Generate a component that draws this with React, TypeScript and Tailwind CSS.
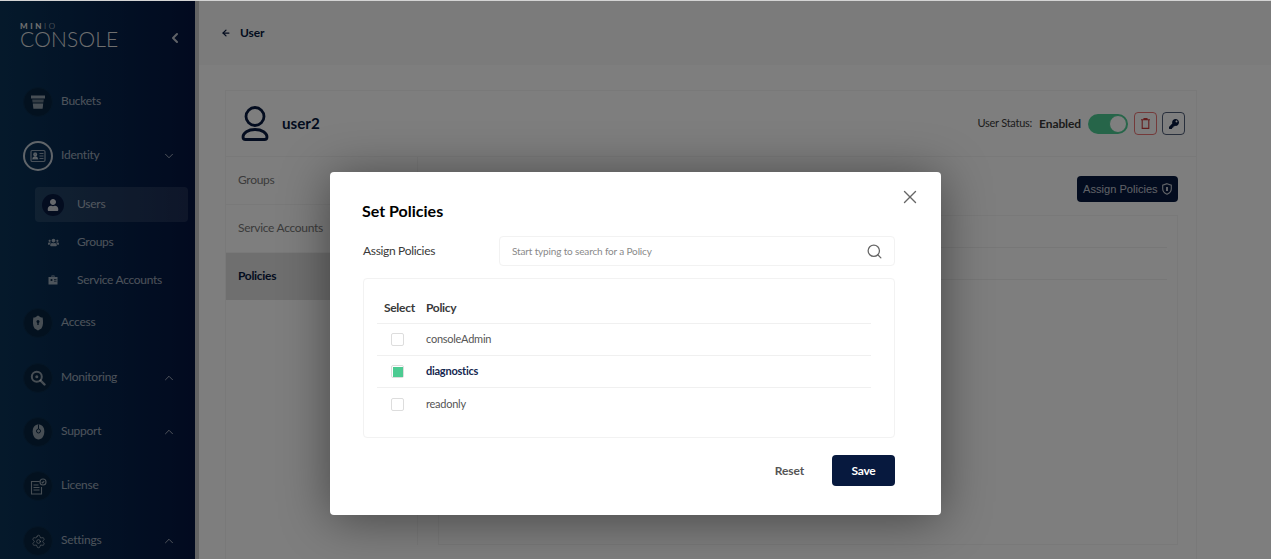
import { ChevronDown, ChevronLeft, ChevronUp, Settings, Search, X, ArrowLeft } from "lucide-react";
import { FaUsers, FaKey, FaUser } from "react-icons/fa";
import type { ReactNode } from "react";

const BucketIcon = () => (
  <svg width="16" height="16" viewBox="0 0 16 16" fill="currentColor" aria-hidden>
    <path d="M1 1.500h14v3H1z" />
    <path d="M2.200 5.600h11.600l-.4 3H2.600z" opacity=".7" />
    <path d="M2.800 9.600h10.400l-.6 5.200H3.400z" />
  </svg>
);

const IdentityIcon = () => (
  <svg width="16" height="14" viewBox="0 0 16 14" fill="none" stroke="currentColor" strokeWidth="1.200" aria-hidden>
    <rect x="1" y="1.500" width="14" height="11" rx="1.200" />
    <path d="M9.500 4.500h4M9.500 7h4M9.500 9.500h4" />
    <circle cx="5.200" cy="5.400" r="1.500" fill="currentColor" />
    <path d="M2.800 10c.2-1.600 1.200-2.200 2.400-2.200s2.200.6 2.400 2.200z" fill="currentColor" />
  </svg>
);

const AccessIcon = () => (
  <svg width="12" height="16" viewBox="0 0 12 16" aria-hidden>
    <path d="M6 .5 9 2.400h1.600c.6 3.600.9 8-1.200 11L6 15.500l-3.400-2.100C.5 10.400.8 6 1.400 2.400H3z" fill="currentColor" />
    <circle cx="6" cy="6.500" r="1.500" fill="#06233f" />
    <path d="M5.300 7h1.400v3H5.300z" fill="#06233f" />
  </svg>
);

const MonitoringIcon = () => (
  <svg width="16" height="16" viewBox="0 0 16 16" fill="none" stroke="currentColor" aria-hidden>
    <circle cx="6.800" cy="6.800" r="5" strokeWidth="2" />
    <circle cx="6.800" cy="6.800" r="1.500" fill="currentColor" stroke="none" />
    <path d="M10.500 10.500 14.500 14.500" strokeWidth="2.400" strokeLinecap="round" />
  </svg>
);

const SupportIcon = () => (
  <svg width="13" height="16" viewBox="0 0 13 16" aria-hidden>
    <path d="M6.500.5c3.300 0 5.800 2.300 5.800 6.800 0 5-2.500 8.200-5.800 8.200S.7 12.300.7 7.300C.7 2.800 3.200.5 6.500.5z" fill="currentColor" />
    <circle cx="6.500" cy="7" r="2" fill="none" stroke="#06233f" strokeWidth="1" />
    <path d="M6.500.5v4.500" stroke="#06233f" strokeWidth="1" />
  </svg>
);

const LicenseIcon = () => (
  <svg width="17" height="17" viewBox="0 0 17 17" fill="none" stroke="currentColor" strokeWidth="1.100" aria-hidden>
    <path d="M9.500 3.500H1.500v12.500h10V9" />
    <path d="M3.500 7h5M3.500 9.500h6M3.500 12h6" />
    <circle cx="13" cy="4" r="3" />
    <path d="m11.800 4 .9.9 1.500-1.700" />
  </svg>
);

const ServiceIcon = () => (
  <svg width="10" height="10" viewBox="0 0 10 10" fill="currentColor" aria-hidden>
    <path d="M3.500.5h3V2h3v7.500H.5V2h3zM4.300 1.200V2h1.400v-.8z" />
    <circle cx="3.500" cy="5" r="1.100" fill="#06233f" />
    <path d="M6 4h2.500v.8H6zM6 5.800h2.500v.8H6z" fill="#06233f" />
  </svg>
);

function NavItem({ icon, label, chevron, active }: { icon: ReactNode; label: string; chevron?: "up" | "down"; active?: boolean }) {
  return (
    <div className="flex h-[54px] items-center pl-[23px] pr-[19px]">
      <div
        className={`flex h-[30px] w-[30px] shrink-0 items-center justify-center rounded-full ${
          active ? "border-2 border-white/75" : "border border-[#0a2c4c] bg-[#06233f]"
        } text-white/55`}
      >
        {icon}
      </div>
      <span className="ml-[8px] flex-1 pb-[2px] text-[12px] tracking-[-0.25px] text-white/60">{label}</span>
      {chevron === "up" && <ChevronUp size={14} strokeWidth={1.5} className="text-white/70" />}
      {chevron === "down" && <ChevronDown size={14} strokeWidth={1.5} className="text-white/70" />}
    </div>
  );
}

function SubItem({ icon, label }: { icon: ReactNode; label: string }) {
  return (
    <div className="ml-[35px] flex h-[32px] items-center pl-[12px] text-white/60">
      <div className="flex w-[12px] justify-center">{icon}</div>
      <span className="ml-[18px] text-[12px] tracking-[-0.3px]">{label}</span>
    </div>
  );
}

function Sidebar() {
  return (
    <aside className="h-[559px] w-[199px] shrink-0 overflow-hidden border-r-[4px] border-[#c9c9c9] bg-gradient-to-r from-[#0a3357] to-[#04143f]">
      <div className="flex h-[75px] items-start justify-between pl-[20px] pr-[12px] pt-[22px]">
        <div className="text-[#dedede]">
          <div className="text-[8px] leading-[8px] tracking-[2.600px]">
            <span className="font-black">MIN</span>
            <span className="font-light">IO</span>
          </div>
          <div className="text-[21px] font-light leading-[17px] tracking-[0.2px]">CONSOLE</div>
        </div>
        <ChevronLeft size={16} strokeWidth={3} className="mt-[8px] text-white/75" />
      </div>
      <NavItem icon={<BucketIcon />} label="Buckets" />
      <NavItem icon={<IdentityIcon />} label="Identity" chevron="down" active />
      <div className="ml-[35px] mr-[7px] mt-[4px] flex h-[35px] items-center rounded-sm bg-white/10 pl-[7px]">
        <div className="flex h-[22px] w-[22px] items-center justify-center rounded-full bg-[#06183f] text-white/80">
          <FaUser size={12} />
        </div>
        <span className="ml-[13px] pb-[2px] text-[12px] tracking-[-0.25px] text-white/60">Users</span>
      </div>
      <div className="mt-[4px]">
        <SubItem icon={<FaUsers size={11} />} label="Groups" />
      </div>
      <div className="mt-[6px]">
        <SubItem icon={<ServiceIcon />} label="Service Accounts" />
      </div>
      <div className="mb-px">
        <NavItem icon={<AccessIcon />} label="Access" />
      </div>
      <NavItem icon={<MonitoringIcon />} label="Monitoring" chevron="up" />
      <NavItem icon={<SupportIcon />} label="Support" chevron="up" />
      <NavItem icon={<LicenseIcon />} label="License" />
      <div className="mt-px">
        <NavItem icon={<Settings size={15} strokeWidth={1.3} />} label="Settings" chevron="up" />
      </div>
    </aside>
  );
}

function UserPage() {
  return (
    <main className="h-[559px] flex-1 overflow-hidden bg-[#fdfdfd]">
      <div className="flex h-[65px] items-center gap-[9px] bg-[#f6f6f6] pl-[22px] text-[#07193e]">
        <ArrowLeft size={10} strokeWidth={3} />
        <span className="text-[12px] font-bold tracking-[-0.15px]">User</span>
      </div>
      <div className="ml-[26px] mr-[74px] mt-[25px] h-[520px] border border-[#f2f2f2]">
        <div className="flex h-[66px] items-center border-b border-[#f2f2f2] pl-[15px] pr-[11px]">
          <svg width="28" height="35" viewBox="0 0 28 35" fill="none" stroke="#07193e" strokeWidth="2.800" aria-hidden>
            <circle cx="14" cy="10.500" r="9" />
            <path d="M14 23.500c-7 0-12 3.500-12 7.500 0 1.500 1 2.500 2.500 2.500h19c1.500 0 2.500-1 2.500-2.500 0-4-5-7.500-12-7.500z" />
          </svg>
          <span className="ml-[13px] flex-1 text-[15.2px] font-bold text-[#07193e]">user2</span>
          <span className="text-[11px] tracking-[-0.25px] text-[#393939]">User Status:</span>
          <span className="ml-[7px] text-[12px] font-bold tracking-[-0.1px] text-[#393939]">Enabled</span>
          <div className="ml-[7px] flex h-[20px] w-[40px] items-center justify-end rounded-full bg-[#4ccb92] pr-[1px]">
            <div className="h-[18px] w-[18px] rounded-full border border-[#4ccb92] bg-white" />
          </div>
          <button className="ml-[6px] flex h-[23px] w-[23px] items-center justify-center rounded-sm border border-[#e03a3a]/70 text-[#c83b3b]">
            <svg width="9" height="11" viewBox="0 0 9 11" fill="none" stroke="currentColor" strokeWidth="1.100" aria-hidden>
              <path d="M0 1.800h9M3 1.800V.6h3v1.200M1.200 1.800v8.600h6.600V1.800" />
            </svg>
          </button>
          <button className="ml-[5px] flex h-[23px] w-[23px] items-center justify-center rounded-sm border border-[#07193e]/70 text-[#07193e]">
            <FaKey size={10} />
          </button>
        </div>
        <div className="flex">
          <div className="w-[192px] shrink-0 border-r border-[#f2f2f2]">
            <div className="flex h-[48px] items-center border-b border-[#f2f2f2] pb-[2px] pl-[12px] text-[12px] tracking-[-0.3px] text-[#777]">Groups</div>
            <div className="flex h-[48px] items-center border-b border-[#f2f2f2] pb-[2px] pl-[12px] text-[12px] tracking-[-0.3px] text-[#777]">Service Accounts</div>
            <div className="flex h-[47px] items-center bg-[#dedede] pb-[2px] pl-[12px] text-[12px] font-bold tracking-[-0.3px] text-[#07193e]">Policies</div>
          </div>
          <div className="flex-1 pl-[20px] pr-[18px] pt-[19px]">
            <div className="flex justify-end">
              <button className="flex h-[26px] w-[101px] items-center gap-[4px] rounded-sm bg-[#07193e] pl-[6px] font-['Liberation_Sans',sans-serif] text-[11.1px] text-white/75">
                Assign Policies
                <svg width="10" height="12" viewBox="0 0 10 12" fill="none" stroke="currentColor" strokeWidth="1.100" aria-hidden>
                  <path d="M5 .7 9.300 2.200v3.600c0 2.600-1.800 4.500-4.300 5.500C2.500 10.300.7 8.400.7 5.800V2.200z" />
                  <path d="M5 4v4" strokeWidth="2" />
                </svg>
              </button>
            </div>
            <div className="mt-[13px] h-[330px] border border-[#f2f2f2] pl-[10px] pr-[10px]">
              <div className="h-[32px] border-b border-[#eeeeee]" />
              <div className="h-[32px] border-b border-[#eeeeee]" />
            </div>
          </div>
        </div>
      </div>
    </main>
  );
}

function PolicyRow({ name, checked }: { name: string; checked?: boolean }) {
  return (
    <div className="flex h-[32px] items-center border-b border-[#f0f0f0] last:border-b-0">
      <div className="ml-[14px] flex h-[13px] w-[13px] items-center justify-center rounded-[2px] border-[1.5px] border-[#dddddd] bg-white">
        {checked && <div className="h-[10px] w-[10px] bg-[#4ccb92]" />}
      </div>
      <span className={`ml-[22px] text-[11px] tracking-[-0.25px] ${checked ? "font-bold text-[#14264f]" : "text-[#555]"}`}>{name}</span>
    </div>
  );
}

function PolicyModal() {
  return (
    <div className="relative h-[343px] w-[611px] rounded-sm bg-white pl-[32px] pr-[46px] pt-[28px] shadow-[0_4px_50px_rgba(0,0,0,0.45)]">
      <X size={22} strokeWidth={1.500} className="absolute right-[20px] top-[14px] text-[#666]" />
      <h2 className="text-[16px] font-bold leading-[22px] text-black">Set Policies</h2>
      <div className="mt-[14px] flex items-center">
        <span className="ml-px w-[136px] text-[12px] tracking-[-0.33px] text-[#393939]">Assign Policies</span>
        <div className="flex h-[30px] flex-1 items-center justify-between rounded-sm border border-[#f2f2f2] pl-[12px] pr-[11px]">
          <span className="pt-px text-[10px] tracking-[-0.15px] text-[#8a8a8a]">Start typing to search for a Policy</span>
          <Search size={17} strokeWidth={1.800} className="text-[#666]" />
        </div>
      </div>
      <div className="ml-px mt-[12px] h-[160px] rounded-sm border border-[#f2f2f2] pl-[13px] pr-[23px] pt-[13px]">
        <div className="flex h-[32px] items-center border-b border-[#f0f0f0] text-[12px] font-bold tracking-[-0.3px] text-[#393939]">
          <span className="ml-[7px] w-[42px]">Select</span>
          <span>Policy</span>
        </div>
        <PolicyRow name="consoleAdmin" />
        <PolicyRow name="diagnostics" checked />
        <PolicyRow name="readonly" />
      </div>
      <div className="mt-[17px] flex items-center justify-end">
        <button className="text-[12px] font-bold tracking-[-0.1px] text-[#555]">Reset</button>
        <button className="ml-[28px] h-[31px] w-[63px] rounded-sm bg-[#07193e] text-[12px] font-bold tracking-[-0.3px] text-white">Save</button>
      </div>
    </div>
  );
}

export default function App() {
  return (
    <div className="relative flex h-[559px] w-[1271px] overflow-hidden font-['Lato','Noto_Sans',sans-serif]">
      <Sidebar />
      <UserPage />
      {/* dialog backdrop */}
      <div className="absolute inset-0 flex justify-center bg-black/50 pt-[172px]">
        <PolicyModal />
      </div>
      <div className="absolute inset-x-0 top-0 h-px bg-[#d4d4d4]" />
    </div>
  );
}
